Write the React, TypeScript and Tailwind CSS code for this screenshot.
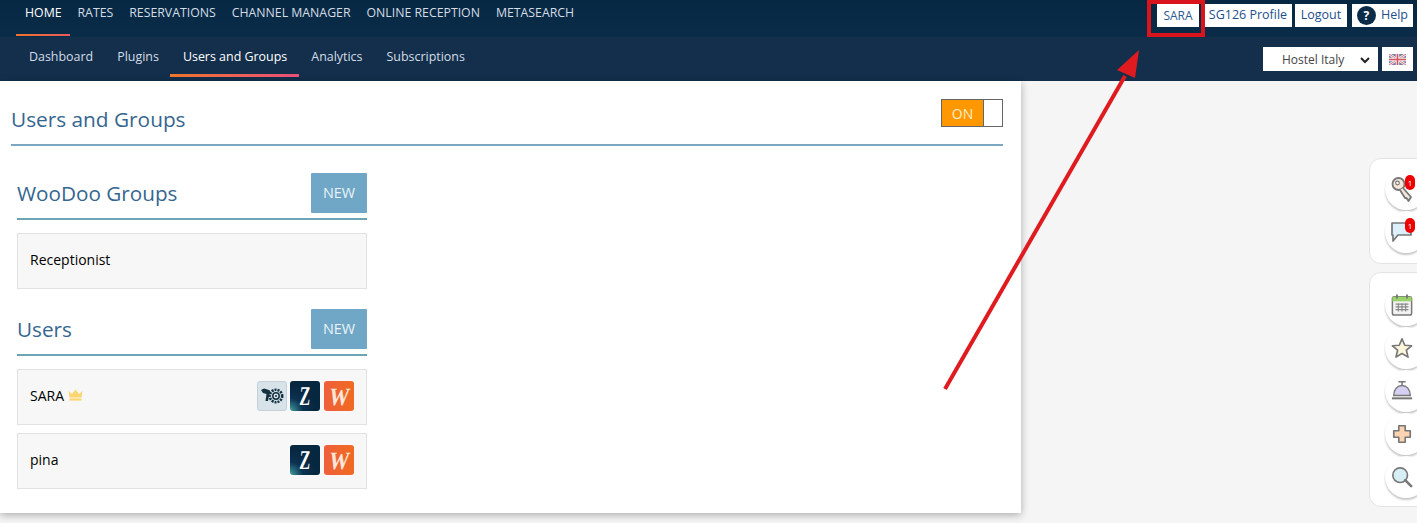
const navTop = ["HOME", "RATES", "RESERVATIONS", "CHANNEL MANAGER", "ONLINE RECEPTION", "METASEARCH"];
const navSub = ["Dashboard", "Plugins", "Users and Groups", "Analytics", "Subscriptions"];

function Z() {
  return (
    <div className="flex h-[30px] w-[30px] items-center justify-center rounded-[3px] bg-[radial-gradient(circle_at_0%_100%,#3f9f9f_0%,#0d3350_30%,#062740_60%)]">
      <span className="inline-block origin-center -skew-x-6 scale-x-[0.6] font-['Liberation_Serif',serif] text-[27px] font-bold leading-none text-white">Z</span>
    </div>
  );
}

function W() {
  return (
    <div className="flex h-[30px] w-[30px] items-center justify-center rounded-[3px] bg-[linear-gradient(90deg,#ee5f3a,#f06a22)]">
      <span className="inline-block -skew-x-12 scale-x-[0.8] font-['Liberation_Serif',serif] text-[25px] font-bold leading-none text-[#fbe6d8]">W</span>
    </div>
  );
}

function Turtle() {
  return (
    <div className="mr-[-1px] flex h-[30px] w-[30px] items-center justify-center rounded-[3px] border border-[#c3d2da] bg-[#d7e3e9]">
      <svg width="25" height="18" viewBox="0 0 25 18">
        <path d="M1 3 L4 1.5 L9 3 C11 4 10 7 9 9 L8 14 L5.5 14 L6.5 7 L3 6 Z" fill="#12303f" />
        <circle cx="16" cy="9" r="6.2" fill="none" stroke="#12303f" strokeWidth="2.6" strokeDasharray="2 1" />
        <circle cx="16" cy="9" r="3.2" fill="none" stroke="#12303f" strokeWidth="1.5" />
        <circle cx="16" cy="9" r="1" fill="#12303f" />
      </svg>
    </div>
  );
}

function Crown() {
  return (
    <svg width="15" height="12" viewBox="0 0 15 12" className="ml-[4px]">
      <path d="M0.5 2 L4 5 L7.5 0.5 L11 5 L14.5 2 L13.5 8.5 L1.5 8.5 Z" fill="#fbd670" />
      <rect x="1.5" y="9.4" width="12" height="2.2" fill="#fbd670" />
    </svg>
  );
}

function Section({ title, children }: { title: string; children: React.ReactNode }) {
  return (
    <div className="w-[350px]">
      <div className="flex h-[47px] items-start justify-between border-b-2 border-[#6ea5b4]">
        <div className="pt-[5px] text-[20.7px] leading-[30px] text-[#35668f]">{title}</div>
        <button className="h-[40px] w-[56px] rounded-[1px] bg-[#70a7c6] text-[14.4px] font-medium text-[#e9f3f8]">NEW</button>
      </div>
      {children}
    </div>
  );
}

function Row({ children, className = "" }: { children: React.ReactNode; className?: string }) {
  return (
    <div className={`flex h-[56px] items-center justify-between border border-[#e2e2e2] bg-[#f7f7f7] pb-[2px] pl-[12px] pr-[12px] text-[14px] text-black ${className}`}>
      {children}
    </div>
  );
}

function Circle({ children }: { children: React.ReactNode }) {
  return (
    <div className="relative flex h-[42px] w-[42px] shrink-0 items-center rounded-full bg-white pl-[6px] shadow-[0_2px_2px_rgba(0,0,0,0.22)]">
      {children}
    </div>
  );
}

function Badge() {
  return (
    <span className="absolute left-[20px] top-[7px] flex h-[15px] w-[10px] items-center justify-center rounded-full bg-[#ee0000] text-[8px] leading-none text-white">
      1
    </span>
  );
}

const stroke = "#777";

export default function App() {
  return (
    <div className="relative h-[523px] w-[1417px] overflow-hidden bg-[#f5f5f5] font-['Open_Sans','Noto_Sans',sans-serif]">
      <header className="flex h-[37px] items-start justify-between bg-[linear-gradient(180deg,#062843,#0b2c48)] pl-[25px] pr-[4px]">
        <nav className="flex gap-[16px]">
          {navTop.map((n, i) => (
            <a key={n} className={`relative h-[37px] pt-[4px] text-[12.3px] leading-[17px] ${i === 0 ? "text-white" : "text-[#d4dde5]"}`}>
              {n}
              {i === 0 && (
                <span className="absolute bottom-[1px] left-[-9px] right-[-8px] h-[2px] bg-[linear-gradient(90deg,#f0752d,#ea5a5a)]" />
              )}
            </a>
          ))}
        </nav>
        <div className="flex pt-[4px] text-[12.5px] font-medium text-[#1d4f8c]">
          <div className="mr-[5px] flex h-[23px] w-[42px] items-center justify-center bg-white text-[12px] font-normal text-[#2a5a92]">SARA</div>
          <div className="mr-[3px] flex h-[23px] w-[88px] items-center justify-center bg-white">SG126 Profile</div>
          <div className="mr-[5px] flex h-[23px] w-[52px] items-center justify-center bg-white">Logout</div>
          <div className="flex h-[23px] w-[61px] items-center justify-center gap-[5px] bg-white">
            <span className="flex h-[19px] w-[19px] items-center justify-center rounded-full bg-[#0b2c48] text-[12px] font-bold text-white">?</span>
            Help
          </div>
        </div>
      </header>

      <div className="flex h-[44px] items-start justify-between bg-[#132f4c] pl-[29px] pr-[4px]">
        <nav className="flex gap-[24px]">
          {navSub.map((n, i) => (
            <a key={n} className={`relative h-[44px] pt-[11px] text-[12.45px] leading-[17px] ${i === 2 ? "text-white" : "text-[#d4dde5]"}`}>
              {n}
              {i === 2 && (
                <span className="absolute bottom-[4px] left-[-13px] right-[-12px] h-[3px] bg-[linear-gradient(90deg,#f0752d,#e9507a)]" />
              )}
            </a>
          ))}
        </nav>
        <div className="flex gap-[4px] pt-[10px]">
          <div className="flex h-[24px] w-[115px] items-center justify-between bg-white pl-[19px] pr-[8px] pt-[1px] text-[12px] text-[#444]">
            Hostel Italy
            <svg width="10" height="8" viewBox="0 0 10 8"><path d="M1 2 L5 6 L9 2" fill="none" stroke="#222" strokeWidth="2" /></svg>
          </div>
          <div className="flex h-[24px] w-[31px] items-center justify-center bg-white">
            <svg width="17" height="11" viewBox="0 0 17 11">
              <rect width="17" height="11" fill="#7a7ea8" />
              <path d="M0 0 L17 11 M17 0 L0 11" stroke="#f2f2f2" strokeWidth="2.4" />
              <path d="M0 0 L17 11 M17 0 L0 11" stroke="#d8555f" strokeWidth="0.8" />
              <path d="M8.5 0 V11 M0 5.5 H17" stroke="#f2f2f2" strokeWidth="3.4" />
              <path d="M8.5 0 V11 M0 5.5 H17" stroke="#d8555f" strokeWidth="1.6" />
            </svg>
          </div>
        </div>
      </div>

      <main className="h-[432px] w-[1021px] bg-white pl-[11px] pr-[18px] pt-[18px] shadow-[0_2px_8px_rgba(0,0,0,0.3)]">
        <div className="flex h-[47px] items-start justify-between border-b-2 border-[#7ba7c0]">
          <h1 className="pt-[5px] text-[20.8px] leading-[30px] text-[#35668f]">Users and Groups</h1>
          <div className="flex h-[28px] w-[62px] border border-[#666]">
            <div className="flex w-[41px] items-center justify-center bg-[#ff9800] text-[14px] text-[#fdeec9]">ON</div>
            <div className="flex-1 border-l border-[#666] bg-white" />
          </div>
        </div>

        <div className="pl-[6px] pt-[27px]">
          <Section title="WooDoo Groups">
            <Row className="mt-[13px]"><span className="mb-[2px]">Receptionist</span></Row>
          </Section>
          <div className="mt-[20px]">
            <Section title="Users">
              <Row className="mt-[13px]">
                <span className="mb-[2px] flex items-center font-medium">SARA<Crown /></span>
                <span className="flex gap-[4px]"><Turtle /><Z /><W /></span>
              </Row>
              <Row className="mt-[8px]">
                <span className="mb-[2px]">pina</span>
                <span className="flex gap-[4px]"><Z /><W /></span>
              </Row>
            </Section>
          </div>
        </div>
      </main>

      {/* floating side widgets */}
      <aside className="absolute left-[1369px] top-[158px] flex h-[106px] w-[70px] flex-col gap-[1px] rounded-l-[12px] border border-[#e4e4e4] bg-white pl-[15px] pt-[9px]">
        <Circle>
          <svg width="22" height="26" viewBox="0 0 22 26">
            <circle cx="7.5" cy="8" r="6" fill="#f4e8da" stroke={stroke} strokeWidth="1.8" />
            <circle cx="6.5" cy="7" r="1.8" fill="#fff" stroke={stroke} strokeWidth="1.2" />
            <path d="M12 12 L20 21 L17.5 25 L15.5 22 L14 22 L9 14" fill="#f4e8da" stroke={stroke} strokeWidth="1.8" strokeLinejoin="round" />
          </svg>
          <Badge />
        </Circle>
        <Circle>
          <svg width="21" height="22" viewBox="0 0 21 22">
            <path d="M1 2 H20 V14 H7 L2 20 V14 H1 Z" fill="#dcf0fb" stroke={stroke} strokeWidth="1.7" strokeLinejoin="round" />
          </svg>
          <Badge />
        </Circle>
      </aside>

      <aside className="absolute left-[1369px] top-[272px] flex h-[235px] w-[70px] flex-col gap-[1px] rounded-l-[12px] border border-[#e4e4e4] bg-white pl-[15px] pt-[11px]">
        <Circle>
          <svg width="22" height="22" viewBox="0 0 24 24">
            <rect x="1.5" y="3" width="21" height="20" rx="2" fill="#f2f2f2" stroke={stroke} strokeWidth="1.6" />
            <rect x="1.5" y="3" width="21" height="5" fill="#9ad36a" />
            <path d="M6.5 0.5 V5 M17.5 0.5 V5" stroke={stroke} strokeWidth="2" />
            <path d="M5 11 H19 M5 14 H19 M5 17 H19 M8 10 V19 M12 10 V19 M16 10 V19" stroke="#888" strokeWidth="1.2" />
          </svg>
        </Circle>
        <Circle>
          <svg width="22" height="22" viewBox="0 0 24 24">
            <path d="M12 2 L15 9 L22.5 9.6 L16.8 14.4 L18.6 22 L12 18 L5.4 22 L7.2 14.4 L1.5 9.6 L9 9 Z" fill="#fdf6dd" stroke={stroke} strokeWidth="1.8" strokeLinejoin="round" />
          </svg>
        </Circle>
        <Circle>
          <svg width="22" height="22" viewBox="0 0 24 24">
            <path d="M8 2 H16 M12 2 V6" stroke={stroke} strokeWidth="1.6" />
            <path d="M3 17 C3 10 7 6 12 6 C17 6 21 10 21 17 Z" fill="#d5cff2" stroke={stroke} strokeWidth="1.6" />
            <path d="M1 20 H23" stroke={stroke} strokeWidth="2.2" />
          </svg>
        </Circle>
        <Circle>
          <svg width="22" height="22" viewBox="0 0 24 24">
            <path d="M8.5 3 H15.5 V8.5 H21 V15.5 H15.5 V21 H8.5 V15.5 H3 V8.5 H8.5 Z" fill="#fbd3b0" stroke={stroke} strokeWidth="1.8" strokeLinejoin="round" />
          </svg>
        </Circle>
        <Circle>
          <svg width="22" height="22" viewBox="0 0 24 24">
            <circle cx="10" cy="10" r="8" fill="#d8eef5" stroke={stroke} strokeWidth="1.8" />
            <path d="M15.5 15.5 L22 22" stroke={stroke} strokeWidth="2.8" strokeLinecap="round" />
          </svg>
        </Circle>
      </aside>

      {/* annotation */}
      <div className="pointer-events-none absolute left-[1147px] top-0 h-[37px] w-[58px] border-[4px] border-[#d9141c]" />
      <svg className="pointer-events-none absolute left-0 top-0" width="1417" height="523">
        <path d="M945 389 L1125 76" stroke="#e01b20" strokeWidth="4" />
        <path d="M1139 50 L1117 70 L1135 78 Z" fill="#e01b20" />
      </svg>
    </div>
  );
}
